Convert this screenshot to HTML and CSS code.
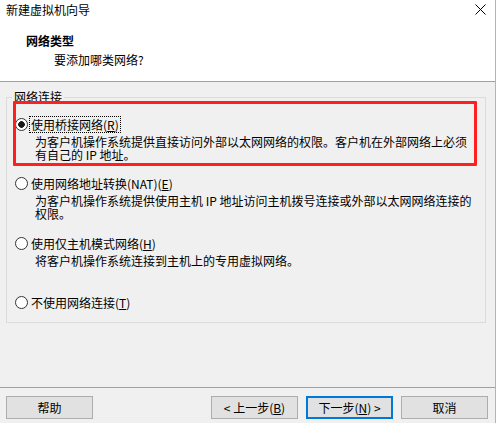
FILE: index.html
```html
<!DOCTYPE html>
<html lang="zh-CN">
<head>
<meta charset="utf-8">
<title>新建虚拟机向导</title>
<link rel="stylesheet" href="styles.css">
</head>
<body>
<div class="window">
  <div class="top">
    <div class="titlebar">
      <span class="title">新建虚拟机向导</span>
      <svg class="close" width="11" height="11" viewBox="0 0 11 11"><path d="M0.5 0.5L10.5 10.5M10.5 0.5L0.5 10.5" stroke="#000" stroke-width="1" fill="none"/></svg>
    </div>
    <div class="heading">网络类型</div>
    <div class="subheading">要添加哪类网络?</div>
  </div>

  <fieldset class="group">
    <legend class="group-label">网络连接</legend>

    <div class="option option-first">
      <span class="highlight"></span>
      <div class="opt-label"><span class="radio checked"></span><span class="label-text focused">使用桥接网络(<u>R</u>)</span></div>
      <div class="desc">为客户机操作系统提供直接访问外部以太网网络的权限。客户机在外部网络上必须<br>有自己的 IP 地址。</div>
    </div>

    <div class="option option-second">
      <div class="opt-label"><span class="radio"></span><span class="label-text">使用网络地址转换(NAT)(<u>E</u>)</span></div>
      <div class="desc">为客户机操作系统提供使用主机 IP 地址访问主机拨号连接或外部以太网网络连接的<br>权限。</div>
    </div>

    <div class="option option-third">
      <div class="opt-label"><span class="radio"></span><span class="label-text">使用仅主机模式网络(<u>H</u>)</span></div>
      <div class="desc">将客户机操作系统连接到主机上的专用虚拟网络。</div>
    </div>

    <div class="option option-fourth">
      <div class="opt-label"><span class="radio"></span><span class="label-text">不使用网络连接(<u>T</u>)</span></div>
    </div>
  </fieldset>

  <div class="footer">
    <button class="btn">帮助</button>
    <div class="nav">
      <button class="btn">&lt; 上一步(<u>B</u>)</button>
      <button class="btn default">下一步(<u>N</u>) &gt;</button>
      <button class="btn">取消</button>
    </div>
  </div>
</div>
</body>
</html>
```

FILE: styles.css
```css
* { box-sizing: border-box; }

html, body {
  margin: 0;
  padding: 0;
  background: #f0f0f0;
}

body {
  font-family: "Noto Sans CJK SC", "Noto Sans", sans-serif;
  font-size: 12px;
  color: #000;
}

.window {
  width: 496px;
  height: 423px;
  display: flex;
  flex-direction: column;
  border-right: 1px solid #b4b4b4;
  background: #f0f0f0;
}

.top {
  background: #fff;
  height: 82px;
  border-bottom: 1px solid #a0a0a0;
}

.titlebar {
  display: flex;
  justify-content: space-between;
  align-items: flex-start;
  padding: 2px 9px 0 6px;
  height: 18px;
}

.title {
  line-height: 16px;
}

.close {
  margin-top: 2px;
  display: block;
}

.heading {
  font-weight: bold;
  line-height: 16px;
  padding-left: 26px;
  margin-top: 15px;
}

.subheading {
  line-height: 16px;
  padding-left: 54px;
  margin-top: 3px;
}

.group {
  margin: 7px 0 0 6px;
  width: 480px;
  padding: 0 0 11px 0;
  border: 1px solid #dcdcdc;
  min-inline-size: 0;
}

.group-label {
  margin-left: 5px;
  padding: 0 2px;
  line-height: 16px;
}

.option {
  position: relative;
}

.option-first { margin-top: 11px; }
.option-second { margin-top: 14px; }
.option-third { margin-top: 15px; }
.option-fourth { margin-top: 27px; }

.highlight {
  position: absolute;
  left: 6px;
  top: -15px;
  width: 464px;
  height: 65px;
  border: 3px solid #ff1f1f;
  border-radius: 1px;
  pointer-events: none;
}

.opt-label {
  display: flex;
  align-items: center;
  height: 17px;
}

.radio {
  width: 13px;
  height: 13px;
  margin-left: 8px;
  border: 1px solid #333;
  border-radius: 50%;
  background: #fff;
  flex: none;
}

.radio.checked {
  background: radial-gradient(circle, #1a1a1a 0, #1a1a1a 3px, #fff 3.6px);
}

.label-text {
  line-height: 15px;
  margin-left: 1px;
  padding: 0 1px;
  border: 1px solid transparent;
  white-space: nowrap;
}

.label-text.focused {
  border: 1px dotted #000;
}

.desc {
  margin-top: 2px;
  padding-left: 28px;
  line-height: 13px;
  white-space: nowrap;
}

u {
  text-decoration: underline;
  text-underline-offset: 1px;
}

.footer {
  margin-top: auto;
  border-top: 1px solid #a0a0a0;
  padding: 8px 7px 4px 6px;
  display: flex;
  justify-content: space-between;
}

.nav {
  display: flex;
  gap: 8px;
}

.btn {
  width: 87px;
  height: 23px;
  padding: 0;
  font-family: inherit;
  font-size: 12px;
  color: #000;
  background: #e1e1e1;
  border: 1px solid #adadad;
  border-radius: 0;
  line-height: 19px;
}

.btn.default {
  border: 2px solid #0078d7;
}
```
